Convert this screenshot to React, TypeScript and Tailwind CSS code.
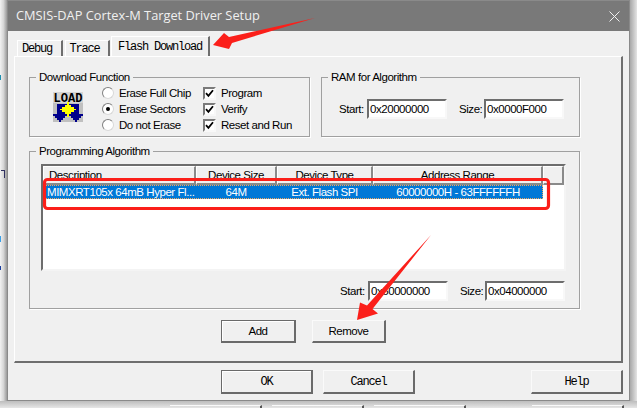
import React from "react";

const sans = "[font-family:'Liberation_Sans',Arial,sans-serif] text-[11.5px] tracking-[-0.45px] leading-[14px] text-black whitespace-nowrap";
const mono = "[font-family:'Liberation_Mono','Courier_New',monospace] text-[12px] tracking-[-1.2px] text-black";

function Group({ title, className, children }: { title: string; className: string; children?: React.ReactNode }) {
  return (
    <fieldset className={`border border-[#a0a0a0] shadow-[1px_1px_0_#fff] ${className}`}>
      <legend className={`ml-[6px] px-[3px] ${sans}`}>{title}</legend>
      {children}
    </fieldset>
  );
}

function Field({ value, className }: { value: string; className?: string }) {
  return (
    <div className={`w-[80px] h-[20px] bg-white border-2 border-t-[#6d6d6d] border-l-[#6d6d6d] border-r-[#f8f8f8] border-b-[#f8f8f8] pl-[1px] flex items-center ${sans} ${className ?? ""}`}>
      {value}
    </div>
  );
}

function Radio({ label, checked }: { label: string; checked?: boolean }) {
  return (
    <div className="flex items-center h-[16px]">
      <div className="w-[12px] h-[12px] rounded-full bg-white border border-t-[#808080] border-l-[#808080] border-r-[#d8d8d8] border-b-[#d8d8d8] flex items-center justify-center">
        {checked && <div className="w-[4px] h-[4px] rounded-full bg-black" />}
      </div>
      <span className={`ml-[5px] ${sans}`}>{label}</span>
    </div>
  );
}

function Check({ label }: { label: string }) {
  return (
    <div className="flex items-center h-[16px]">
      <div className="w-[13px] h-[13px] bg-white border-2 border-t-[#7a7a7a] border-l-[#7a7a7a] border-r-[#f8f8f8] border-b-[#f8f8f8] flex items-center justify-center">
        <svg width="9" height="9" viewBox="0 0 9 9">
          <path d="M1 4.2 L3.4 6.8 L8 1.2" fill="none" stroke="#000" strokeWidth="1.8" />
        </svg>
      </div>
      <span className={`ml-[5px] ${sans}`}>{label}</span>
    </div>
  );
}

function Btn({ label, className, strong, font }: { label: string; className: string; strong?: boolean; font: string }) {
  const edge = strong
    ? "border border-[#6a6a6a] border-r-2 border-b-2 shadow-[inset_1px_1px_0_#fff]"
    : "border border-t-[#fafafa] border-l-[#fafafa] border-r-2 border-b-2 border-r-[#6a6a6a] border-b-[#6a6a6a]";
  return <div className={`flex items-center justify-center bg-[#f0f0f0] ${edge} ${font} ${className}`}>{label}</div>;
}

function Tab({ label, className }: { label: string; className: string }) {
  return (
    <div className={`flex items-center justify-center bg-[#f0f0f0] border-t border-l border-white border-r-2 border-r-[#6e6e6e] ${mono} ${className}`}>
      {label}
    </div>
  );
}

function HeaderCell({ label, className }: { label: string; className: string }) {
  return (
    <div className={`h-full flex items-center justify-center border-t border-l border-white border-r-2 border-r-[#8a8a8a] border-b-2 border-b-[#8a8a8a] pb-[1px] ${sans} ${className}`}>
      {label}
    </div>
  );
}

function LoadIcon() {
  return (
    <svg width="30" height="30" viewBox="0 0 30 30" shapeRendering="crispEdges" overflow="visible">
      <rect width="30" height="30" fill="#c0c0c0" />
      <rect width="30" height="11" fill="#d4d4d4" />
      <text x="0.5" y="10" fontFamily="Liberation Mono" fontWeight="700" fontSize="13" textLength="29" lengthAdjust="spacingAndGlyphs" fill="#000" shapeRendering="auto">
        LOAD
      </text>
      <path d="M4 12h22v10h4v2h-2v2h-2v2h-2v2h-2v-2h-2v-2h-2v-2h-2v-2h-2v2h-2v2h-2v2h-2v2h-2v-2h-2v-2h-2v-2h-2v-2h4z" fill="#00008b" />
      <path d="M14 10h2v3h2v2h3v2h2v1h-2v2h-3v2h-2v3h-2v-3h-2v-2h-3v-2h-2v-1h2v-2h3v-2h2z" fill="#ffff00" />
    </svg>
  );
}

function Annotations() {
  return (
    <svg className="absolute left-0 top-0 pointer-events-none" width="637" height="408" viewBox="0 0 637 408">
      <rect x="44.5" y="179.5" width="504" height="29" rx="3" fill="none" stroke="#fb1f1a" strokeWidth="3.2" />
      <polygon points="213,45 224,33 229,37 315,18 232,43 229,49" fill="#fb1f1a" />
      <polygon points="431,235 372.5,309 378,313.5 357,320 360,302.5 367,305.5" fill="#fb1f1a" />
    </svg>
  );
}

export default function App() {
  return (
    <div className="relative w-[637px] h-[408px] overflow-hidden flex flex-col bg-[#e6e6e6]">
      <div className="flex h-[401px]">
        {/* left backdrop */}
        <div className="w-[7px] bg-gradient-to-r from-[#f2f2f2] via-[#d6d6d6] to-[#9a9a9a] flex flex-col">
          <div className="mt-[75px] ml-0 w-[1px] h-[5px] bg-[#1c8fb0]" />
          <div className="mt-[90px] ml-[1px] w-[4px] h-[8px] border-t border-r border-[#303060]" />
          <div className="mt-[58px] w-[1px] h-[6px] bg-[#3aa0e8]" />
          <div className="mt-[24px] w-[1px] h-[4px] bg-[#1a3ea0]" />
        </div>

        {/* dialog */}
        <div className="w-[623px] h-full flex flex-col bg-[#f0f0f0] border border-[#8a8a8a]">
          <div className="h-[30px] shrink-0 bg-[#797979] flex items-center justify-between pl-[8px] pr-[9px]">
            <span className="[font-family:'Open_Sans',sans-serif] text-[12.8px] text-[#f0f0f0]">
              CMSIS-DAP Cortex-M Target Driver Setup
            </span>
            <svg width="11" height="11" viewBox="0 0 11 11">
              <path d="M0.5 0.5 L10.5 10.5 M10.5 0.5 L0.5 10.5" stroke="#f0f0f0" strokeWidth="1" />
            </svg>
          </div>

          <div className="flex-1 flex flex-col pl-[6px] pr-[6px]">
            {/* tabs */}
            <div className="flex items-end h-[25px] shrink-0 pl-[3px] gap-[2px]">
              <Tab label="Debug" className="w-[46px] h-[16px] mt-auto pr-[5px]" />
              <Tab label="Trace" className="w-[45px] h-[16px] pr-[5px]" />
              <Tab label="Flash Download" className="w-[99px] h-[20px] -ml-[1px]" />
            </div>

            {/* tab page */}
            <div className="h-[307px] shrink-0 border-t border-l border-white border-r-2 border-r-[#6e6e6e] border-b-2 border-b-[#6e6e6e] pl-[14px] pt-[13px]">
              <div className="flex gap-[11px] h-[67px]">
                <Group title="Download Function" className="w-[281px] h-full">
                  <div className="flex mt-[1px]">
                    <div className="ml-[23px] mt-[7px]">
                      <LoadIcon />
                    </div>
                    <div className="ml-[19px] w-[101px] flex flex-col">
                      <Radio label="Erase Full Chip" />
                      <Radio label="Erase Sectors" checked />
                      <Radio label="Do not Erase" />
                    </div>
                    <div className="flex flex-col">
                      <Check label="Program" />
                      <Check label="Verify" />
                      <Check label="Reset and Run" />
                    </div>
                  </div>
                </Group>
                <Group title="RAM for Algorithm" className="w-[259px] h-full">
                  <div className="flex items-center mt-[15px] pl-[17px]">
                    <span className={`w-[28px] ${sans}`}>Start:</span>
                    <Field value="0x20000000" />
                    <span className={`ml-[12px] w-[25px] ${sans}`}>Size:</span>
                    <Field value="0x0000F000" />
                  </div>
                </Group>
              </div>

              <Group title="Programming Algorithm" className="w-[551px] h-[165px] mt-[7px]">
                <div className="ml-[11px] mt-[6px] w-[525px] h-[107px] bg-white border-2 border-t-[#6d6d6d] border-l-[#6d6d6d] border-r-[#f4f4f4] border-b-[#f4f4f4]">
                  <div className="flex h-[19px] bg-[#f0f0f0]">
                    <HeaderCell label="Description" className="w-[153px] !justify-start pl-[5px]" />
                    <HeaderCell label="Device Size" className="w-[81px]" />
                    <HeaderCell label="Device Type" className="w-[96px]" />
                    <HeaderCell label="Address Range" className="w-[170px]" />
                    <HeaderCell label="" className="flex-1" />
                  </div>
                  <div className="ml-[2px] w-[498px] h-[14px] bg-[#0078d7] flex text-white outline-1 outline-dotted -outline-offset-1 outline-[#f0a860]">
                    <div className={`w-[151px] pl-[2px] ${sans} !text-white`}>MIMXRT105x 64mB Hyper Fl...</div>
                    <div className={`w-[80px] text-center ${sans} !text-white`}>64M</div>
                    <div className={`w-[97px] text-center ${sans} !text-white`}>Ext. Flash SPI</div>
                    <div className={`w-[170px] text-center ${sans} !text-white`}>60000000H - 63FFFFFFH</div>
                  </div>
                </div>
                <div className="flex items-center mt-[10px] pl-[310px]">
                  <span className={`w-[28px] ${sans}`}>Start:</span>
                  <Field value="0x60000000" />
                  <span className={`ml-[12px] w-[25px] ${sans}`}>Size:</span>
                  <Field value="0x04000000" />
                </div>
              </Group>

              <div className="flex gap-[16px] ml-[192px] mt-[11px]">
                <Btn label="Add" strong font={sans} className="w-[75px] h-[23px]" />
                <Btn label="Remove" font={sans} className="w-[74px] h-[23px]" />
              </div>
            </div>

            {/* footer */}
            <div className="flex mt-[7px] ml-[207px]">
              <Btn label="OK" strong font={mono} className="w-[92px] h-[24px]" />
              <Btn label="Cancel" font={mono} className="w-[92px] h-[24px] ml-[10px]" />
              <Btn label="Help" font={mono} className="w-[92px] h-[24px] ml-[116px]" />
            </div>
          </div>
        </div>

        {/* right backdrop */}
        <div className="w-[7px] bg-gradient-to-r from-[#a8a8a8] to-[#e4e4e4]" />
      </div>

      {/* bottom backdrop */}
      <div className="flex-1 bg-gradient-to-b from-[#bdbdbd] to-[#e6e6e6] flex pt-[4px] pl-[170px]">
        <div className="w-[92px] border-t border-t-[#fafafa] border-r-2 border-r-[#555]" />
        <div className="w-[92px] ml-[10px] border-t border-t-[#fafafa] border-r-2 border-r-[#555]" />
        <div className="w-[92px] ml-[10px] border-t border-t-[#fafafa] border-r-2 border-r-[#555]" />
        <div className="w-[92px] ml-[66px] border-t border-t-[#fafafa] border-r-2 border-r-[#555]" />
      </div>

      <Annotations />
    </div>
  );
}
